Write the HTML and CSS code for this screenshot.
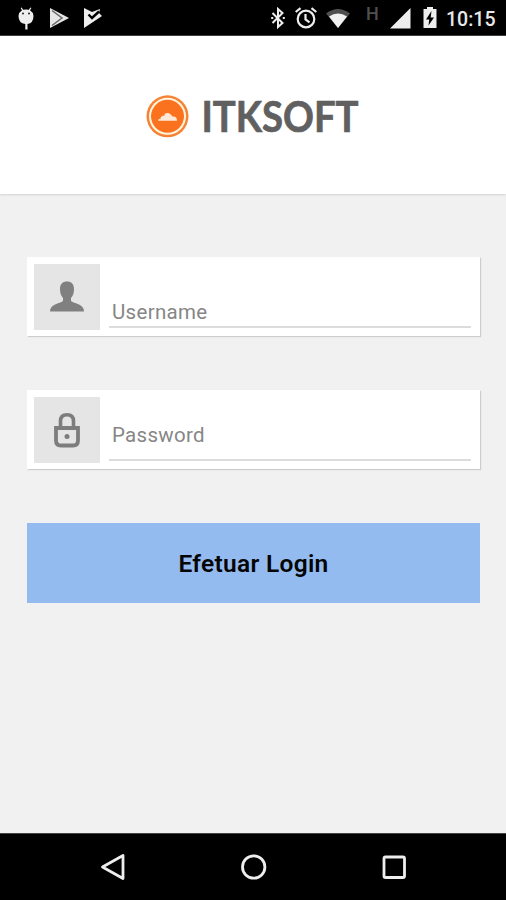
FILE: index.html
```html
<!DOCTYPE html>
<html lang="pt-BR">
<head>
<meta charset="utf-8">
<title>ITKSOFT</title>
<link rel="stylesheet" href="styles.css">
</head>
<body>
<div class="screen">
  <div class="status">
    <div class="group">
      <svg width="18" height="26" viewBox="0 0 18 26" fill="#eee"><path d="M1.500 11Q2 7 5 5.300L3.600 3 4.600 2.400 6.200 4.800Q9 4 11.800 4.800L13.400 2.400 14.400 3 13 5.300Q16 7 16.500 11 16.500 18 10.500 19V24.500H8.300V19Q1.500 18 1.500 11z"/><circle cx="6" cy="8.500" r="1" fill="#222"/><circle cx="12" cy="8.500" r="1" fill="#222"/></svg>
      <svg width="20" height="26" viewBox="0 0 20 26"><path d="M1 3 20 13 1 23z" fill="#e6e6e6"/><path d="M3 5.500 13 13 3 20.500" stroke="#666" stroke-width="1.500" fill="none"/></svg>
      <svg width="20" height="26" viewBox="0 0 20 26"><path d="M1 3 9 7 17 4 16 8 19 11 1 23z" fill="#eee"/><path d="M5.500 9.500 9 13 16 6.500" stroke="#000" stroke-width="2.400" fill="none"/></svg>
    </div>
    <div class="group right">
      <svg class="bt" width="16" height="26" viewBox="0 0 16 26" fill="none" stroke="#eee" stroke-width="2"><path d="M2.500 8 12.500 18 8 22V4L12.500 8 2.500 18"/><path d="M1.200 13h2M12.800 13h2"/></svg>
      <svg class="alarm" width="24" height="26" viewBox="0 0 24 26" fill="none" stroke="#eee" stroke-width="2.200"><circle cx="12" cy="14" r="8.300"/><path d="M11.500 9v5.500l4 2.800M1.700 7 6.500 3.200M22.300 7 17.500 3.200"/></svg>
      <svg class="wifi" width="26" height="26" viewBox="0 0 26 26"><path d="M1 8.500Q13-.5 25 8.500L13 23z" fill="#505050"/><path d="M4 11.500Q13 5.500 22 11.500L13 23z" fill="#f2f2f2"/></svg>
      <span class="net">H</span>
      <svg class="signal" width="22" height="26" viewBox="0 0 22 26"><path d="M21.500 3v20.500H1z" fill="#eee"/></svg>
      <svg class="battery" width="14" height="26" viewBox="0 0 14 26"><path d="M4 2h6v2h3.500v19H.5V4H4z" fill="#eee"/><path d="M8.500 6 3 14.500h3.200L5.500 20.500 11 12.500H7.700z" fill="#000"/></svg>
      <span class="clock">10:15</span>
    </div>
  </div>
  <header class="header">
    <svg class="emblem" width="44" height="44" viewBox="0 0 44 44"><circle cx="21.500" cy="22.300" r="21" fill="#f68333"/><circle cx="21.500" cy="22.300" r="18.500" fill="#fff5df"/><circle cx="21.500" cy="22.300" r="16.500" fill="#fa721e"/><path d="M12 26.800Q12 24.500 14.500 24.700L15 22.500H16L17 21.500 18.500 22V20Q23 17 26.500 22.500Q31 22 31 26.800z" fill="#ffe8d8"/></svg>
    <svg class="brand" width="160" height="54" viewBox="0 0 160 54"><text x="-.5" y="37.500" textLength="157" lengthAdjust="spacingAndGlyphs">ITKSOFT</text></svg>
  </header>
  <main class="form">
    <label class="field">
      <span class="tile"><svg width="66" height="66" viewBox="0 0 66 66" fill="#808080"><path d="M33 17.500C37.500 17.500 40 20 40 25Q40 31 37 34V37Q38.500 38.200 42 39.200Q50 41.500 50 47.500H16Q16 41.500 24 39.200Q27.500 38.200 29 37V34Q26 31 26 25C26 20 28.500 17.500 33 17.500z"/></svg></span>
      <span class="line user">Username</span>
    </label>
    <label class="field">
      <span class="tile"><svg width="66" height="66" viewBox="0 0 66 66" fill="none" stroke="#7d7d7d"><path d="M26.500 30V24Q26.500 17.700 33 17.700T39.500 24V30" stroke-width="3.600"/><path d="M22 31H44V43.500Q44 48.500 39 48.500H27Q22 48.500 22 43.500z" stroke-width="3.800"/><circle cx="33" cy="39.500" r="2.500" fill="#7d7d7d" stroke="none"/></svg></span>
      <span class="line pass">Password</span>
    </label>
    <button class="login">Efetuar Login</button>
  </main>
  <nav class="nav">
    <svg width="28" height="30" viewBox="0 0 28 30"><path d="M3.500 15 24 3.500v23z"/></svg>
    <svg width="28" height="30" viewBox="0 0 28 30"><circle cx="13.700" cy="15" r="11.200"/></svg>
    <svg width="28" height="30" viewBox="0 0 28 30"><rect x="4" y="5" width="20.500" height="20.500" rx="1.500"/></svg>
  </nav>
</div>
</body>
</html>
```
FILE: styles.css
```css
* { box-sizing: border-box; }
body { margin: 0; font-family: Roboto, "Liberation Sans", sans-serif; }
svg { display: block; flex: none; }
.screen { width: 506px; height: 900px; display: flex; flex-direction: column; background: #f1f1f1; }
.status { height: 36px; background: #000; display: flex; justify-content: space-between; align-items: flex-start; padding: 5px 10px 0 17px; border-bottom: 1px solid #333; }
.group { display: flex; gap: 14px; }
.group.right { gap: 0; }
.alarm { margin-left: 8px; }
.wifi { margin-left: 7px; }
.net { width: 14px; margin-left: 15px; font-size: 18px; line-height: 18px; font-weight: 500; color: #505050; }
.signal { margin-left: 9px; }
.battery { margin-left: 12px; }
.clock { width: 50px; margin-left: 9px; font-size: 19.5px; line-height: 29px; font-weight: 500; color: #e8e8e8; white-space: nowrap; }
.header { height: 158px; flex: none; background: #fff; display: flex; align-items: flex-start; padding: 58px 0 0 146px; box-shadow: 0 1px 2px #d2d2d2; }
.brand { margin-left: 12px; overflow: visible; }
.brand text { font-family: Lato, sans-serif; font-weight: 700; font-size: 42.5px; font-kerning: none; fill: #606060; stroke: #606060; stroke-width: .7; }
.form { flex: 1; padding: 63px 26px 0 27px; }
.field { display: flex; height: 79px; margin-bottom: 54px; padding: 7px 9px 8px 7px; background: #fff; box-shadow: 1px 1px 1px #cdcdcd; }
.tile { width: 66px; height: 66px; background: #e5e5e5; flex: none; }
.line { flex: 1; margin-left: 9px; padding-left: 3px; height: 64px; border-bottom: 2px solid #dcdcdc; font-size: 20.5px; line-height: 24px; letter-spacing: .3px; color: #868686; }
.user { padding-top: 36px; }
.pass { padding-top: 26px; }
.login { display: block; width: 453px; height: 80px; border: 0; padding: 1px 0 0; background: #94bbef; color: #050505; font: 600 24.5px/79px Roboto, sans-serif; letter-spacing: .3px; }
.nav { height: 67px; flex: none; background: #000; border-top: 1px solid #444; display: flex; justify-content: space-between; align-items: center; padding: 0 98px 0 99px; }
.nav svg { fill: none; stroke: #eee; stroke-width: 2.800; stroke-linejoin: round; }
```
